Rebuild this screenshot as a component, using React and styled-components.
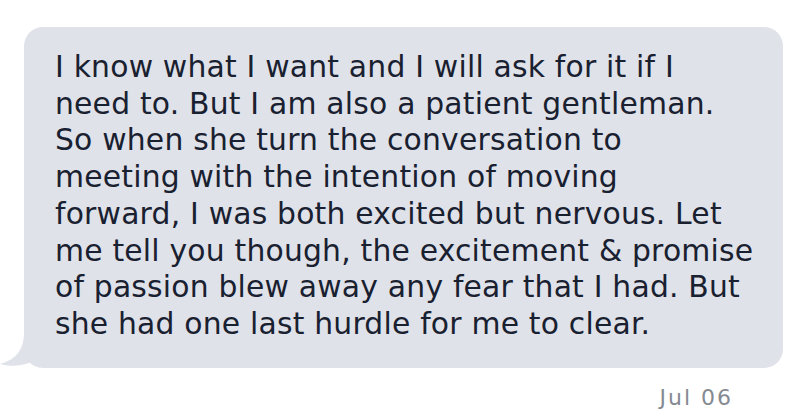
import React from "react";
import styled, { createGlobalStyle } from "styled-components";

const GlobalStyle = createGlobalStyle`
  html, body {
    margin: 0;
    padding: 0;
    background: #ffffff;
  }
`;

const Thread = styled.div`
  width: 800px;
  height: 418px;
  box-sizing: border-box;
  padding: 27px 17px 0 24px;
  display: flex;
  flex-direction: column;
  font-family: "DejaVu Sans", "Noto Sans", sans-serif;
`;

const Bubble = styled.div`
  position: relative;
  background: #dfe2e9;
  border-radius: 19px;
  padding: 22px 10px 14px 31px;
  height: 341px;
  box-sizing: border-box;
`;

const Tail = styled.svg`
  position: absolute;
  left: -24px;
  bottom: 0;
`;

const MessageText = styled.p`
  margin: 0;
  color: #192030;
  font-size: 29.8px;
  line-height: 36.7px;
  letter-spacing: 0.2px;
`;

const Line = styled.span`
  display: block;
  white-space: nowrap;
`;

const Stamp = styled.div`
  align-self: flex-end;
  margin: 17px 50px 0 0;
  color: #858a93;
  font-size: 22px;
  letter-spacing: 2px;
`;

const lines = [
  "I know what I want and I will ask for it if I",
  "need to. But I am also a patient gentleman.",
  "So when she turn the conversation to",
  "meeting with the intention of moving",
  "forward, I was both excited but nervous. Let",
  "me tell you though, the excitement & promise",
  "of passion blew away any fear that I had. But",
  "she had one last hurdle for me to clear.",
];

export default function App() {
  return (
    <>
      <GlobalStyle />
      <Thread>
        <Bubble>
          <Tail width="40" height="36" viewBox="0 0 40 36">
            <path
              d="M24 0 C24 16 18 27 0 32 C10 35 22 34 32 30 L40 36 L40 0 Z"
              fill="#dfe2e9"
            />
          </Tail>
          <MessageText>
            {lines.map((l) => (
              <Line key={l}>{l}</Line>
            ))}
          </MessageText>
        </Bubble>
        <Stamp>Jul 06</Stamp>
      </Thread>
    </>
  );
}
